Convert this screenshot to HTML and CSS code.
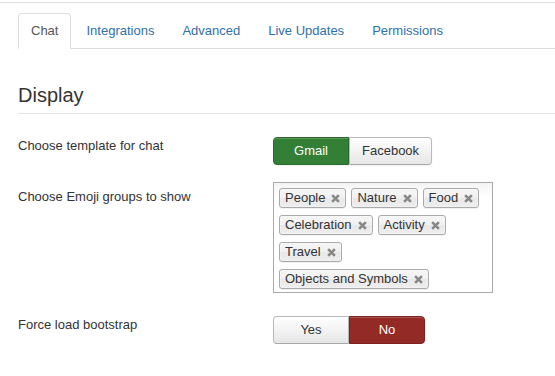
FILE: index.html
```html
<!DOCTYPE html>
<html>
<head>
<meta charset="utf-8">
<link rel="stylesheet" href="styles.css">
</head>
<body>
<div class="page">
  <ul class="tabs">
    <li class="tab active">Chat</li>
    <li class="tab">Integrations</li>
    <li class="tab">Advanced</li>
    <li class="tab">Live Updates</li>
    <li class="tab">Permissions</li>
  </ul>
  <h2 class="legend">Display</h2>
  <div class="form">
    <div class="row row-template">
      <div class="label">Choose template for chat</div>
      <div class="controls">
        <div class="btn-group">
          <span class="btn btn-green">Gmail</span><span class="btn">Facebook</span>
        </div>
      </div>
    </div>
    <div class="row row-emoji">
      <div class="label label-emoji">Choose Emoji groups to show</div>
      <div class="controls">
        <div class="chosen">
          <span class="tag">People<svg class="x" viewBox="0 0 8 8"><path d="M1 1L7 7M7 1L1 7"/></svg></span>
          <span class="tag">Nature<svg class="x" viewBox="0 0 8 8"><path d="M1 1L7 7M7 1L1 7"/></svg></span>
          <span class="tag">Food<svg class="x" viewBox="0 0 8 8"><path d="M1 1L7 7M7 1L1 7"/></svg></span>
          <span class="tag">Celebration<svg class="x" viewBox="0 0 8 8"><path d="M1 1L7 7M7 1L1 7"/></svg></span>
          <span class="tag">Activity<svg class="x" viewBox="0 0 8 8"><path d="M1 1L7 7M7 1L1 7"/></svg></span>
          <span class="tag">Travel<svg class="x" viewBox="0 0 8 8"><path d="M1 1L7 7M7 1L1 7"/></svg></span>
          <span class="tag">Objects and Symbols<svg class="x" viewBox="0 0 8 8"><path d="M1 1L7 7M7 1L1 7"/></svg></span>
        </div>
      </div>
    </div>
    <div class="row row-bootstrap">
      <div class="label">Force load bootstrap</div>
      <div class="controls">
        <div class="btn-group">
          <span class="btn">Yes</span><span class="btn btn-red">No</span>
        </div>
      </div>
    </div>
  </div>
</div>
</body>
</html>
```
FILE: styles.css
```css
html, body {
  margin: 0;
  padding: 0;
  background: #fff;
}
body {
  font-family: "Liberation Sans", Arial, Helvetica, sans-serif;
  font-size: 13px;
  color: #333;
}
.page {
  margin-top: 2px;
  border-top: 1px solid #ddd;
  padding: 10px 0 0 18px;
}
.tabs {
  display: flex;
  list-style: none;
  margin: 0;
  padding: 0;
  border-bottom: 1px solid #ddd;
}
.tab {
  padding: 8px 12px;
  line-height: 18px;
  border: 1px solid transparent;
  border-radius: 4px 4px 0 0;
  margin-right: 2px;
  margin-bottom: -1px;
  color: #3071a9;
}
.tab.active {
  border-color: #ddd;
  border-bottom-color: #fff;
  background: #fff;
  color: #555;
}
.legend {
  margin: 34px 0 23px 0;
  padding: 0 0 6px 0;
  font-size: 20px;
  line-height: 24px;
  font-weight: normal;
  color: #333;
  border-bottom: 1px solid #e5e5e5;
}
.row {
  display: grid;
  grid-template-columns: 255px 1fr;
}
.row-template {
  margin-bottom: 17px;
}
.row-emoji {
  margin-bottom: 23px;
}
.label {
  line-height: 17px;
  color: #333;
}
.label-emoji {
  padding-top: 6px;
}
.btn-group {
  display: flex;
}
.btn {
  display: inline-block;
  min-width: 50px;
  padding: 4px 12px;
  line-height: 18px;
  text-align: center;
  color: #333;
  border: 1px solid #b9b9b9;
  border-bottom-color: #a8a8a8;
  background: linear-gradient(#ffffff, #e6e6e6);
  box-shadow: inset 0 1px 0 rgba(255,255,255,.2), 0 1px 2px rgba(0,0,0,.05);
}
.btn:first-child {
  border-radius: 4px 0 0 4px;
}
.btn:last-child {
  border-radius: 0 4px 4px 0;
}
.btn-green {
  background: #347f36;
  border-color: #2b6a2d;
  color: #fff;
}
.btn-red {
  background: #942a25;
  border-color: #7d231f;
  color: #fff;
}
.chosen {
  box-sizing: border-box;
  width: 220px;
  display: flex;
  flex-wrap: wrap;
  align-content: flex-start;
  gap: 7px 5px;
  padding: 5px 5px 3px 5px;
  border: 1px solid #aaa;
  background: linear-gradient(#f4f4f4 0%, #fff 12%);
}
.tag {
  position: relative;
  box-sizing: border-box;
  height: 20px;
  padding: 0 20px 0 5px;
  line-height: 18px;
  border: 1px solid #aaa;
  border-radius: 3px;
  color: #333;
  background: linear-gradient(#f4f4f4 20%, #f0f0f0 50%, #e8e8e8 52%, #eeeeee 100%);
  box-shadow: inset 0 0 2px #fff, 0 1px 0 rgba(0,0,0,.05);
  white-space: nowrap;
}
.x {
  position: absolute;
  right: 5px;
  top: 5px;
  width: 9px;
  height: 9px;
  stroke: #888;
  stroke-width: 2.3;
  fill: none;
}
```
